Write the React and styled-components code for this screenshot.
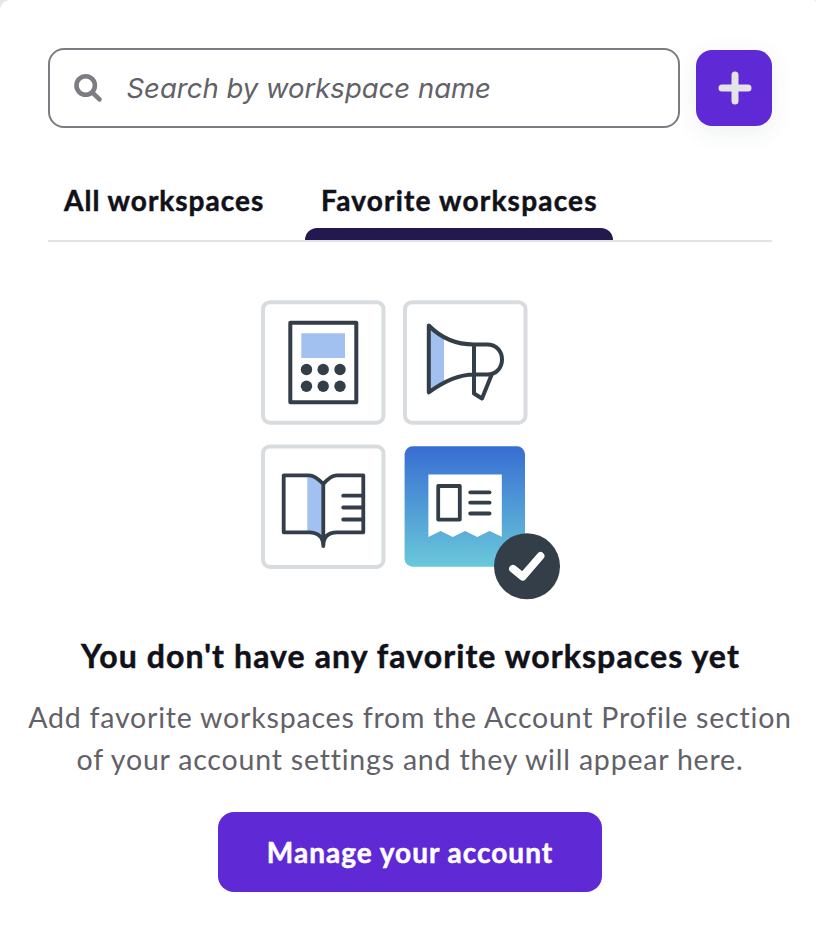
import React from 'react';
import styled, { createGlobalStyle } from 'styled-components';

const GlobalStyle = createGlobalStyle`
  * { box-sizing: border-box; }
  body { margin: 0; background: #e6e6e8; }
  button, input { font: inherit; }
`;

const Panel = styled.main`
  height: 944px;
  padding-top: 48px;
  display: flex;
  flex-direction: column;
  align-items: center;
  overflow: hidden;
  background: #fff;
  border-radius: 10px 3px 0 0;
  font-family: Lato, "Open Sans", sans-serif;
  color: #11111a;
`;

const Toolbar = styled.div`
  align-self: stretch;
  margin: 0 44px 0 48px;
  display: flex;
  align-items: center;
  gap: 16px;
`;

const SearchField = styled.label`
  flex: 1;
  height: 80px;
  padding-left: 23px;
  display: flex;
  align-items: center;
  gap: 23.5px;
  border: 2px solid #7d7c82;
  border-radius: 16px;
`;

const SearchInput = styled.input`
  flex: 1;
  min-width: 0;
  height: 60px;
  padding: 0;
  border: 0;
  outline: 0;
  background: transparent;
  font-family: Inter, sans-serif;
  font-size: 27.5px;
  font-style: italic;
  &::placeholder { color: #626168; opacity: 1; }
`;

const AddButton = styled.button`
  width: 76px;
  height: 76px;
  padding: 0 0 0 1px;
  display: grid;
  place-items: center;
  border: 0;
  border-radius: 16px;
  background: #6029d6;
  box-shadow: 0 6px 24px rgba(30, 60, 50, 0.08);
`;

const TabList = styled.nav`
  align-self: stretch;
  height: 70px;
  margin: 44px 44px 0 48px;
  display: flex;
  gap: 24px;
  border-bottom: 2px solid #e3e3e4;
`;

const Tab = styled.button`
  width: ${(p) => p.$width}px;
  height: 68px;
  padding: 10px 0 0 16px;
  display: flex;
  flex-direction: column;
  justify-content: space-between;
  border: 0;
  background: none;
  color: inherit;
  text-align: left;
  font-size: 28px;
  line-height: 36px;
  font-weight: 700;
  -webkit-text-stroke: 0.5px currentColor;
  letter-spacing: ${(p) => p.$spacing}px;
  white-space: nowrap;
  &::after {
    content: "";
    height: 12px;
    width: calc(100% + 16px);
    margin-left: -16px;
    border-radius: 12px 12px 0 0;
    background: ${(p) => (p.$active ? '#24194f' : 'transparent')};
  }
`;

const Artwork = styled.svg`
  display: block;
  flex: none;
  margin: 54px 0 0 4px;
`;

const Title = styled.h1`
  margin: 36px 0 0 5px;
  font-size: 32px;
  line-height: 40px;
  font-weight: 700;
  -webkit-text-stroke: 0.5px currentColor;
  letter-spacing: 1.1px;
  white-space: nowrap;
`;

const Description = styled.p`
  margin: 20px 0 0 4px;
  font-size: 28.5px;
  line-height: 42px;
  letter-spacing: 0.8px;
  text-align: center;
  white-space: nowrap;
  color: #626168;
`;

const PrimaryButton = styled.button`
  width: 384px;
  height: 80px;
  margin: 32px 0 0 4px;
  flex: none;
  border: 0;
  border-radius: 16px;
  background: #6029d6;
  color: #fff;
  font-size: 28px;
  font-weight: 700;
  -webkit-text-stroke: 0.5px currentColor;
  letter-spacing: 1px;
`;

const SearchIcon = () => (
  <svg width="30" height="30" viewBox="0 0 30 30" fill="none" stroke="#7d7c82">
    <circle cx="12.7" cy="12.5" r="9.2" strokeWidth="4.6" />
    <path d="M19.2 19.4 26.5 26.3" strokeWidth="4.6" strokeLinecap="round" />
  </svg>
);

const PlusIcon = () => (
  <svg width="34" height="34" viewBox="0 0 34 34" stroke="#e4e4e6" strokeWidth="7" strokeLinecap="round">
    <path d="M17 4v26M4 17h26" />
  </svg>
);

const EmptyArtwork = () => (
  <Artwork width="308" height="304" viewBox="256 296 308 304" fill="none" stroke="#333e48" strokeWidth="4" strokeLinecap="round" strokeLinejoin="round">
    <defs>
      <linearGradient id="receipt" x1="0" y1="0" x2="0" y2="1">
        <stop stopColor="#386dd2" />
        <stop offset="1" stopColor="#69c8da" />
      </linearGradient>
    </defs>
    <g stroke="#d8dcdf">
      <rect x="263" y="302.2" width="120.5" height="120.5" rx="7" />
      <rect x="405" y="302.2" width="120.5" height="120.5" rx="7" />
      <rect x="263" y="446.4" width="120.5" height="120.5" rx="7" />
    </g>
    {/* calculator */}
    <rect x="290.3" y="322.7" width="66" height="79.5" />
    <path d="M301.3 333.3h43.7v24.7h-43.7z" fill="#a3c1f0" stroke="none" />
    <g fill="#333e48" stroke="none">
      {[369.5, 386.3].map((y) => [306.5, 323.2, 340].map((x) => <circle key={`${x}-${y}`} cx={x} cy={y} r="5.7" />))}
    </g>
    {/* megaphone */}
    <path d="M429 326 Q436 333 444 337.5V382L429 391z" fill="#a3c1f0" stroke="none" />
    <path d="M428.8 325.5C440 337 455 344.5 474 344.5H487C507 344.5 507 374.5 487 374.5H474C458 374.5 443 382 428.8 392.3ZM474 344.5V393.5L482 398.5 491.5 375" />
    {/* book */}
    <path d="M307.3 475.5Q315 475 323 484V540Q318 533 307.3 532z" fill="#a3c1f0" stroke="none" />
    <path d="M323.3 484C318 478.5 313 475.3 309 475.3H283.7V532.3H309C317 532.3 323.3 536 323.3 546C323.3 536 329 532.3 337 532.3H363.3V475.3H337C333 475.3 328 478.5 323.3 484ZM323.3 484V546M343.2 495.7H362M343.2 507.5H362M343.2 519.5H362" strokeWidth="3.8" />
    {/* receipt */}
    <rect x="404.6" y="446.3" width="120.4" height="120.4" rx="8" fill="url(#receipt)" stroke="none" />
    <path d="M428.4 474.6H501.8V536.8L489.5 531 477.3 537 465 531 452.8 537 440.6 531 428.4 537z" fill="#fff" stroke="none" />
    <path d="M438.2 486H459.8V519.6H438.2zM470.2 492.3H489.6M470.2 502.7H489.6M470.2 513.5H489.6" strokeWidth="3.8" />
    <circle cx="527" cy="566.3" r="33" fill="#333e48" stroke="none" />
    <path d="M513 568.8 522.7 576.6 540.5 556" stroke="#fff" strokeWidth="7.8" />
  </Artwork>
);

export default function App() {
  return (
    <>
      <GlobalStyle />
      <Panel>
        <Toolbar>
          <SearchField>
            <SearchIcon />
            <SearchInput placeholder="Search by workspace name" />
          </SearchField>
          <AddButton aria-label="Add workspace"><PlusIcon /></AddButton>
        </Toolbar>
        <TabList>
          <Tab $width={233} $spacing={1}>All workspaces</Tab>
          <Tab $width={308} $spacing={1.2} $active>Favorite workspaces</Tab>
        </TabList>
        <EmptyArtwork />
        <Title>You don't have any favorite workspaces yet</Title>
        <Description>
          Add favorite workspaces from the Account Profile section<br />
          of your account settings and they will appear here.
        </Description>
        <PrimaryButton>Manage your account</PrimaryButton>
      </Panel>
    </>
  );
}
